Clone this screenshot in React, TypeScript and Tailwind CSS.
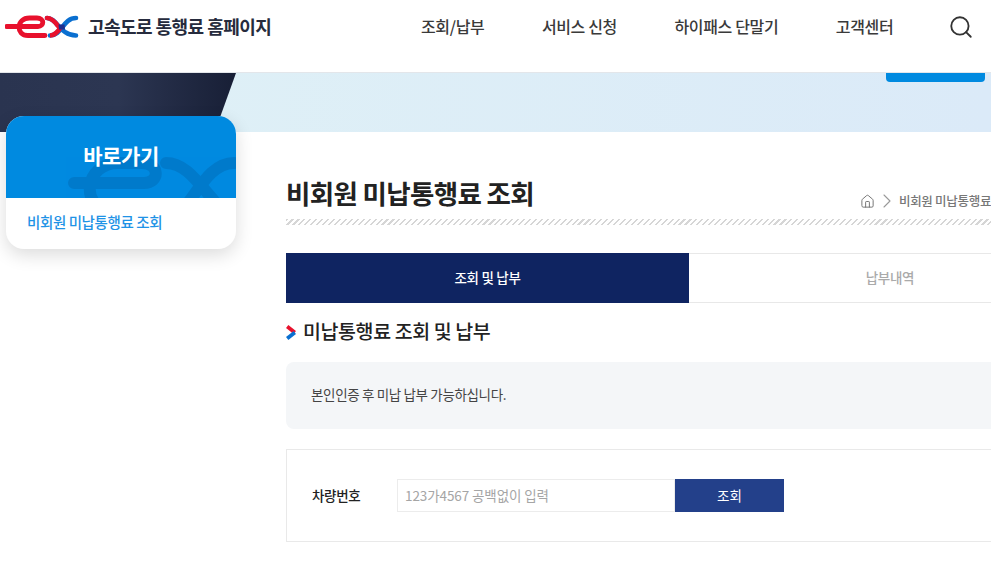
import { Search, Home, ChevronRight } from "lucide-react";

const navItems = ["조회/납부", "서비스 신청", "하이패스 단말기", "고객센터"];

function ExLogo() {
  return (
    <svg width="74" height="24" viewBox="0 0 74 24" fill="none" className="shrink-0">
      <path d="M1.5 11.5H33C39.5 11.5 39.5 3 32 3H24.5C11 3 10.5 20.5 23 20.5H40" stroke="#e8112d" strokeWidth="4.8" strokeLinecap="round" />
      <path d="M42 3C52 3 55 20.5 71 20.5" stroke="#0a6fd0" strokeWidth="4.6" strokeLinecap="round" />
      <path d="M42 3C47.5 3 50.5 7.5 53 11" stroke="#e8112d" strokeWidth="4.6" strokeLinecap="round" />
      <path d="M45 20.5C57 20.5 58 3 71 3" stroke="#0a6fd0" strokeWidth="4.6" strokeLinecap="round" />
      <path d="M45 20.5C50 20.5 53 16.5 55.5 12.5" stroke="#e8112d" strokeWidth="4.6" strokeLinecap="butt" />
      <path d="M53.5 9.5L59.5 9.5L60 14.5L54 14.5Z" fill="#1d2f8f" />
    </svg>
  );
}

function Watermark() {
  return (
    <svg width="180" height="52" viewBox="0 0 180 52" fill="none" className="absolute left-[60px] top-[41px]">
      <g stroke="#00305f" strokeWidth="12" strokeLinecap="round" opacity="0.16">
        <path d="M8 26H78C94 26 94 6 76 6H52C18 6 14 52 44 52H92" />
        <path d="M100 6C120 6 132 26 150 46" />
        <path d="M112 56C128 46 140 6 168 6" />
      </g>
    </svg>
  );
}

export default function App() {
  return (
    <div className="h-[562px] w-[991px] overflow-hidden bg-white font-['Noto_Sans_CJK_KR','Noto_Sans',sans-serif] text-[#222]">
      <header className="flex h-[73px] items-center border-b border-[#e3e6ea] bg-white pb-[19px]">
        <div className="ml-[5px] flex w-[416px] items-center gap-[9px]">
          <ExLogo />
          <span className="text-[18px] font-bold tracking-[-0.55px] text-[#262b3d]">고속도로 통행료 홈페이지</span>
        </div>
        <nav className="-mt-[2px] flex gap-[57.5px]">
          {navItems.map((item) => (
            <a key={item} className="text-[16px] font-medium tracking-[-0.35px] text-[#3a3a3a]">
              {item}
            </a>
          ))}
        </nav>
        <Search className="ml-[55px] h-[26px] w-[26px] text-[#333]" strokeWidth={1.7} />
      </header>

      <div className="flex h-[59px] justify-between bg-gradient-to-r from-[#dff1f6] to-[#dbeaf8] pr-[6px]">
        <div className="h-full w-[236px] bg-gradient-to-r from-[#2a3450] via-[#2c3652] to-[#181f36] [clip-path:polygon(0_0,100%_0,91%_100%,0_100%)]" />
        <div className="h-[9px] w-[99px] rounded-b-[4px] bg-[#008ae0]" />
      </div>

      <main className="flex">
        <aside className="relative z-10 ml-[6px] mt-[-16px] h-[133px] w-[230px] shrink-0 overflow-hidden rounded-[18px] bg-white shadow-[0_6px_18px_rgba(0,0,0,0.14)]">
          <div className="relative flex h-[82px] justify-center overflow-hidden bg-[#008ae0] pt-[23px]">
            <Watermark />
            <h2 className="relative text-[21px] font-bold leading-[32px] tracking-[-0.4px] text-white">바로가기</h2>
          </div>
          <div className="pl-[21px] pt-[14px] text-[14.5px] font-medium leading-[20px] tracking-[-0.4px] text-[#1f93e6]">
            비회원 미납통행료 조회
          </div>
        </aside>

        <section className="ml-[50px] w-[806px] shrink-0">
          <div className="flex h-[87px] items-end justify-between pb-[6px]">
            <h1 className="pb-[0px] text-[26.5px] font-bold leading-[40px] tracking-[-0.65px] text-[#222]">비회원 미납통행료 조회</h1>
            <div className="mr-[76px] flex items-center text-[#777]">
              <Home className="h-[15px] w-[15px]" strokeWidth={1.6} />
              <ChevronRight className="h-[24px] w-[24px] text-[#999]" strokeWidth={1.1} />
              <span className="text-[12.5px] font-medium tracking-[-0.3px]">비회원 미납통행료 조회</span>
            </div>
          </div>
          <div className="h-[6px] bg-[repeating-linear-gradient(135deg,#d6d6d6_0_1.5px,#fff_1.5px_4.2px)]" />

          <div className="mt-[28px] flex h-[50px]">
            <div className="flex w-[403px] items-center justify-center bg-[#0f2461] pb-[2px] text-[13.5px] font-medium tracking-[-0.3px] text-white">
              조회 및 납부
            </div>
            <div className="flex w-[403px] items-center justify-center border-y border-r border-[#e8e8e8] pb-[2px] text-[13.5px] font-medium tracking-[-0.3px] text-[#aaa]">
              납부내역
            </div>
          </div>

          <div className="mt-[14px] flex h-[30px] items-center">
            <svg width="11" height="15" viewBox="0 0 11 15" className="shrink-0">
              <path d="M1.2 1.5L8.8 7.5" stroke="#e8112d" strokeWidth="3.8" fill="none" />
              <path d="M8.8 7.5L1.2 13.5" stroke="#0a6fd0" strokeWidth="3.8" fill="none" />
            </svg>
            <h3 className="ml-[6px] pb-[3px] text-[19.5px] font-medium tracking-[-0.4px] text-[#222]">미납통행료 조회 및 납부</h3>
          </div>

          <div className="mt-[15px] flex h-[67px] items-center rounded-[8px] bg-[#f4f6f8] pb-[2px] pl-[25px] text-[13.5px] tracking-[-0.35px] text-[#444]">
            본인인증 후 미납 납부 가능하십니다.
          </div>

          <div className="mt-[20px] flex h-[93px] items-center border border-[#e9e9e9] pl-[25px]">
            <span className="w-[85px] shrink-0 pb-[1px] text-[13.5px] font-medium tracking-[-0.35px] text-[#222]">차량번호</span>
            <div className="flex h-[33px] w-[278px] items-center border border-[#ececec] pb-[1px] pl-[7px] text-[13.5px] tracking-[-0.1px] text-[#a5a5a5]">
              123가4567 공백없이 입력
            </div>
            <button className="flex h-[33px] w-[109px] items-center justify-center bg-[#23408a] pb-[1px] text-[13.5px] text-white">조회</button>
          </div>
        </section>
      </main>
    </div>
  );
}
